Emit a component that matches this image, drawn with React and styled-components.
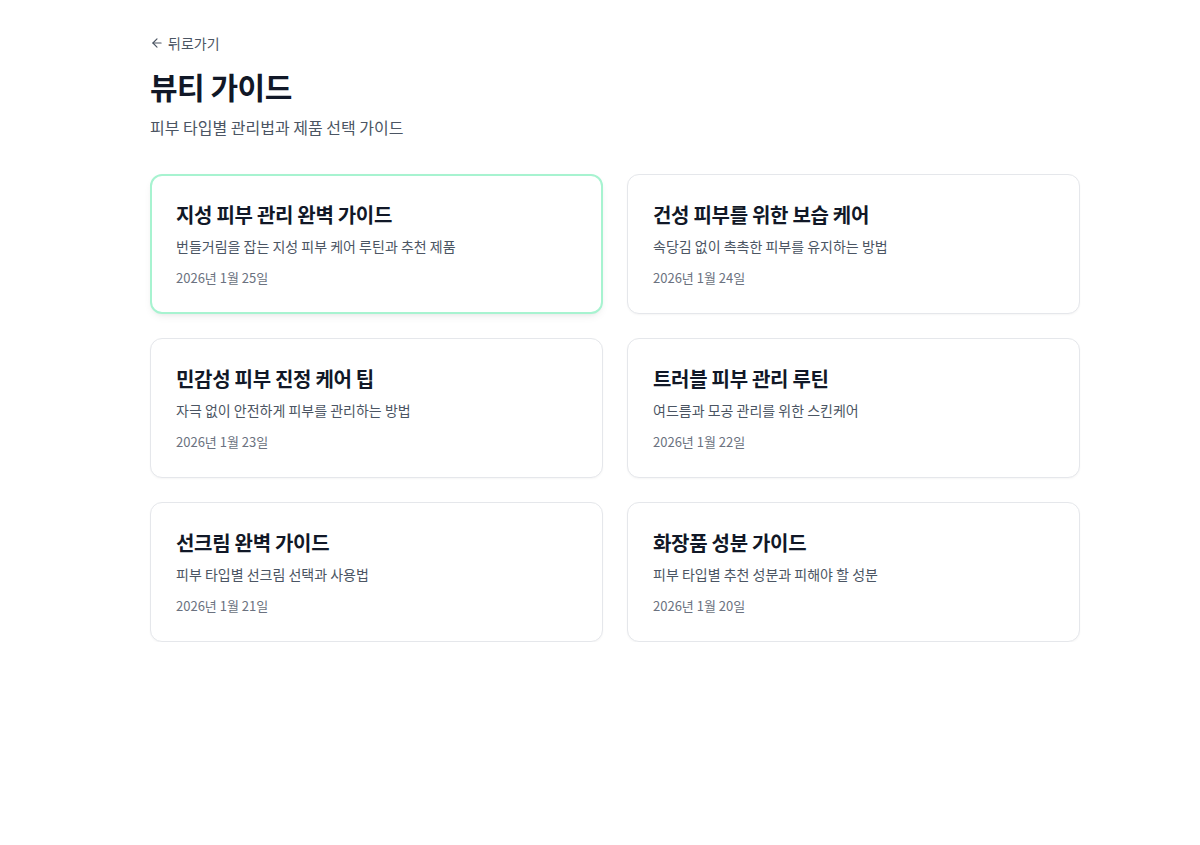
import React from 'react';
import styled, { createGlobalStyle } from 'styled-components';

const guides = [
  { title: '지성 피부 관리 완벽 가이드', desc: '번들거림을 잡는 지성 피부 케어 루틴과 추천 제품', date: '2026년 1월 25일', active: true },
  { title: '건성 피부를 위한 보습 케어', desc: '속당김 없이 촉촉한 피부를 유지하는 방법', date: '2026년 1월 24일' },
  { title: '민감성 피부 진정 케어 팁', desc: '자극 없이 안전하게 피부를 관리하는 방법', date: '2026년 1월 23일' },
  { title: '트러블 피부 관리 루틴', desc: '여드름과 모공 관리를 위한 스킨케어', date: '2026년 1월 22일' },
  { title: '선크림 완벽 가이드', desc: '피부 타입별 선크림 선택과 사용법', date: '2026년 1월 21일' },
  { title: '화장품 성분 가이드', desc: '피부 타입별 추천 성분과 피해야 할 성분', date: '2026년 1월 20일' },
];

const App = () => {
  return (
    <>
      <GlobalStyle />
      <Page>
        <BackLink href="#">
          <svg width="14" height="14" viewBox="0 0 24 24" fill="none" stroke="currentColor" strokeWidth="2" strokeLinecap="round" strokeLinejoin="round">
            <path d="M19 12H5" />
            <path d="M12 19l-7-7 7-7" />
          </svg>
          뒤로가기
        </BackLink>
        <Title>뷰티 가이드</Title>
        <Subtitle>피부 타입별 관리법과 제품 선택 가이드</Subtitle>
        <Grid>
          {guides.map((g) => (
            <Card key={g.title} $active={g.active}>
              <CardTitle>{g.title}</CardTitle>
              <CardDesc>{g.desc}</CardDesc>
              <CardDate>{g.date}</CardDate>
            </Card>
          ))}
        </Grid>
      </Page>
    </>
  );
};

const GlobalStyle = createGlobalStyle`
  body {
    margin: 0;
    background: #ffffff;
    font-family: "Noto Sans CJK KR", "Noto Sans", sans-serif;
    -webkit-font-smoothing: antialiased;
  }
`;

const Page = styled.div`
  width: 930px;
  margin-left: 150px;
  padding-top: 31px;
`;

const BackLink = styled.a`
  display: inline-flex;
  align-items: center;
  gap: 4px;
  font-size: 14px;
  line-height: 20px;
  color: #4b5563;
  text-decoration: none;
`;

const Title = styled.h1`
  margin: 12px 0 0;
  font-size: 30px;
  line-height: 38px;
  font-weight: 700;
  color: #111827;
  letter-spacing: -0.5px;
`;

const Subtitle = styled.p`
  margin: 10px 0 0;
  font-size: 16px;
  line-height: 24px;
  color: #4b5563;
`;

const Grid = styled.div`
  display: grid;
  grid-template-columns: 1fr 1fr;
  gap: 24px;
  margin-top: 35px;
`;

const Card = styled.div`
  box-sizing: border-box;
  height: 140px;
  border-radius: 12px;
  background: #fff;
  padding: ${(p) => (p.$active ? '25px 24px' : '26px 25px')};
  border: ${(p) => (p.$active ? '2px solid #a7f3d0' : '1px solid #e5e7eb')};
  box-shadow: ${(p) =>
    p.$active ? '0 4px 8px -2px rgba(0,0,0,0.08), 0 2px 4px -2px rgba(0,0,0,0.05)' : '0 1px 2px rgba(0,0,0,0.04)'};
`;

const CardTitle = styled.h2`
  margin: 0;
  font-size: 20px;
  line-height: 28px;
  font-weight: 700;
  color: #111827;
  letter-spacing: -0.3px;
`;

const CardDesc = styled.p`
  margin: 7px 0 0;
  font-size: 14px;
  line-height: 20px;
  color: #4b5563;
`;

const CardDate = styled.p`
  margin: 12px 0 0;
  font-size: 13px;
  line-height: 20px;
  color: #6b7280;
`;

export default App;
